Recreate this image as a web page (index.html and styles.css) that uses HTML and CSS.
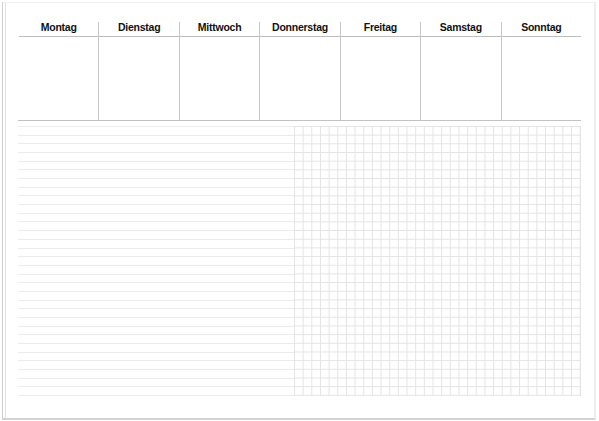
FILE: index.html
```html
<!DOCTYPE html>
<html lang="de">
<head>
<meta charset="utf-8">
<title>Wochenplaner</title>
<link rel="stylesheet" href="styles.css">
</head>
<body>
<div class="paper">
  <div class="week">
    <div class="day"><div class="day-name">Montag</div></div>
    <div class="day"><div class="day-name">Dienstag</div></div>
    <div class="day"><div class="day-name">Mittwoch</div></div>
    <div class="day"><div class="day-name">Donnerstag</div></div>
    <div class="day"><div class="day-name">Freitag</div></div>
    <div class="day"><div class="day-name">Samstag</div></div>
    <div class="day"><div class="day-name">Sonntag</div></div>
  </div>
  <div class="notes">
    <div class="lined"></div>
    <div class="grid"></div>
  </div>
</div>
</body>
</html>
```

FILE: styles.css
```css
html, body {
  margin: 0;
  padding: 0;
  background: #ffffff;
}

body {
  padding: 2px 3px 0 2px;
  font-family: "Liberation Sans", Arial, sans-serif;
}

.paper {
  box-sizing: border-box;
  width: 594px;
  height: 418px;
  background: #ffffff;
  padding: 19px 13px 0 15px;
  border-top: 1px solid #f0f0f0;
  border-left: 1px solid #cfcfcf;
  border-right: 2px solid #ededed;
  border-bottom: 2px solid #d2d2d2;
  box-shadow: inset 2px 0 0 #ffffff, inset 3px 0 0 #e2e2e2;
}

.week {
  display: grid;
  grid-template-columns: repeat(7, 1fr);
  border-bottom: 1px solid #c2c2c2;
}

.day {
  height: 98px;
  border-left: 1px solid #c6c6c6;
}

.day:first-child {
  border-left-color: transparent;
}

.day-name {
  box-sizing: border-box;
  height: 15px;
  line-height: 10px;
  border-bottom: 1px solid #bdbdbd;
  text-align: center;
  font-size: 10.5px;
  letter-spacing: -0.25px;
  font-weight: bold;
  color: #111111;
}

.notes {
  display: flex;
  margin-top: 5px;
  height: 271px;
}

.lined {
  flex: 1;
  background-image: repeating-linear-gradient(to bottom, #ececec 0, #ececec 1px, transparent 1px, transparent 8.68px);
}

.grid {
  width: 287px;
  height: 270px;
  background-image:
    linear-gradient(to right, #e4e4e4 1px, transparent 1px),
    linear-gradient(to bottom, #e4e4e4 1px, transparent 1px);
  background-size: 8.66px 8.68px;
  border-right: 1px solid #e4e4e4;
  box-sizing: border-box;
}
```
